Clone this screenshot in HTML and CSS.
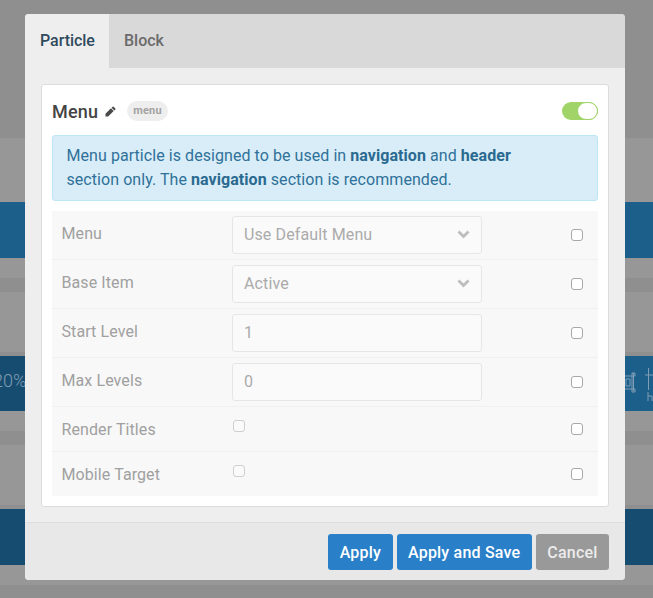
FILE: index.html
```html
<!DOCTYPE html>
<html lang="en">
<head>
<meta charset="utf-8">
<title>Menu particle</title>
<link rel="stylesheet" href="styles.css">
</head>
<body>
<div class="backdrop">
  <div class="band band-top"></div>
  <div class="band band-light b64"></div>
  <div class="band band-blue b56"></div>
  <div class="band band-light b20"></div>
  <div class="band band-dark b14"></div>
  <div class="band band-light b60"></div>
  <div class="band band-thin"></div>
  <div class="band band-grad b55">
    <span class="bg-pct">20%</span>
    <svg class="bg-icons" width="36" height="40" viewBox="0 0 36 40" fill="none" stroke="#7f9db3" stroke-width="1"><path d="M0 11h8v13H0M9.500 8v18M8 8h3v3H8zM8 24h3v3H8zM2 14h4v7H2z"/><path d="M21 10h8M24.500 3v22M24 27v9M24 31h4v5"/></svg>
  </div>
  <div class="band band-light b20"></div>
  <div class="band band-dark b14"></div>
  <div class="band band-light b60"></div>
  <div class="band band-thin"></div>
  <div class="band band-navy b56"></div>
  <div class="band band-light b20"></div>
  <div class="band band-dark b14"></div>
</div>

<div class="modal">
  <div class="tabs">
    <div class="tab tab-active">Particle</div>
    <div class="tab">Block</div>
  </div>
  <div class="body">
    <div class="card">
      <div class="card-head">
        <span class="title">Menu</span>
        <svg class="pencil" width="11" height="11" viewBox="0 0 12 12"><path fill="#4a4a4a" d="M8.300 0.700a0.700 0.700 0 0 1 1 0l2 2a0.700 0.700 0 0 1 0 1l-1.100 1.100-3-3zM6.500 2.500l3 3-6 6H0.500v-3z"/></svg>
        <span class="pill">menu</span>
        <span class="toggle"><span class="knob"></span></span>
      </div>
      <div class="alert">Menu particle is designed to be used in <b>navigation</b> and <b>header</b> section only. The <b>navigation</b> section is recommended.</div>
      <div class="rows">
        <div class="row">
          <div class="label">Menu</div>
          <div class="field select">Use Default Menu<svg class="chev" width="13" height="9" viewBox="0 0 13 9"><path d="M1.500 1.500l5 5 5-5" fill="none" stroke="#bdbdbd" stroke-width="2.800"/></svg></div>
          <span class="check end"></span>
        </div>
        <div class="row">
          <div class="label">Base Item</div>
          <div class="field select">Active<svg class="chev" width="13" height="9" viewBox="0 0 13 9"><path d="M1.500 1.500l5 5 5-5" fill="none" stroke="#bdbdbd" stroke-width="2.800"/></svg></div>
          <span class="check end"></span>
        </div>
        <div class="row">
          <div class="label">Start Level</div>
          <div class="field">1</div>
          <span class="check end"></span>
        </div>
        <div class="row">
          <div class="label">Max Levels</div>
          <div class="field">0</div>
          <span class="check end"></span>
        </div>
        <div class="row row-short">
          <div class="label">Render Titles</div>
          <div class="cell"><span class="check faint"></span></div>
          <span class="check end"></span>
        </div>
        <div class="row row-short">
          <div class="label">Mobile Target</div>
          <div class="cell"><span class="check faint"></span></div>
          <span class="check end"></span>
        </div>
      </div>
    </div>
  </div>
  <div class="footer">
    <button class="btn btn-blue">Apply</button>
    <button class="btn btn-blue">Apply and Save</button>
    <button class="btn btn-gray">Cancel</button>
  </div>
</div>
</body>
</html>
```
FILE: styles.css
```css
* { box-sizing: border-box; }
html, body { margin: 0; padding: 0; }
body {
  width: 653px;
  height: 598px;
  overflow: hidden;
  position: relative;
  font-family: Roboto, "Liberation Sans", sans-serif;
  font-size: 16px;
  background: #8f8f8f;
}

/* dimmed page behind the dialog */
.backdrop { display: flex; flex-direction: column; height: 598px; overflow: hidden; position: relative; }
.band { flex: none; position: relative; }
.band-top { height: 138px; background: #8f8f8f; }
.band-light { background: #979797; }
.band-dark { background: #8f8f8f; }
.band-blue { background: #1c5f8b; }
.band-navy { background: #164c70; }
.band-grad { background: linear-gradient(90deg, #164c70 0, #164c70 25px, #1c5f8b 625px); color: #7f9db3; overflow: hidden; }
.band-thin { height: 4px; background: #8f8f8f; }
.b64 { height: 64px; }
.b60 { height: 60px; }
.b56 { height: 56px; }
.b55 { height: 55px; }
.b20 { height: 20px; }
.b14 { height: 14px; }
.bg-pct { position: absolute; left: -7px; top: 14px; font-size: 18px; font-weight: 300; white-space: nowrap; }
.bg-icons { position: absolute; left: 624px; top: 9px; }

/* dialog */
.modal {
  position: absolute;
  left: 25px;
  top: 14px;
  width: 600px;
  height: 566px;
  background: #eeeeee;
  border-radius: 4px;
  overflow: hidden;
  display: flex;
  flex-direction: column;
}
.tabs { display: flex; height: 54px; background: #d9d9d9; flex: none; }
.tab {
  padding: 0 15px;
  line-height: 54px;
  font-size: 16px;
  font-weight: 500;
  color: #6b6b6b;
}
.tab-active { background: #eeeeee; color: #2f4a5c; width: 84px; letter-spacing: -0.05px; }
.body { flex: 1; padding: 16px 16px 15px; }
.card {
  height: 423px;
  background: #fff;
  border: 1px solid #dcdcdc;
  border-radius: 3px;
  padding: 0 10px;
}
.card-head { display: flex; align-items: center; height: 50px; padding-top: 2px; }
.title { font-size: 18px; font-weight: 500; color: #444444; letter-spacing: 0.2px; }
.pencil { margin-left: 7px; }
.pill {
  margin-left: 11px;
  height: 20px;
  line-height: 20px;
  padding: 0 6px;
  border-radius: 10px;
  background: #eeeeee;
  color: #a3a3a3;
  font-size: 11px;
  font-weight: 700;
  letter-spacing: 0.2px;
}
.toggle {
  margin-left: auto;
  width: 36px;
  height: 18px;
  border-radius: 9px;
  background: #a0d468;
  position: relative;
}
.knob {
  position: absolute;
  right: 0;
  top: 0;
  width: 21px;
  height: 18px;
  border-radius: 9px;
  background: #fff;
  border: 1px solid #a0d468;
}
.alert {
  height: 66px;
  background: #d9edf8;
  border: 1px solid #bde6f4;
  border-radius: 3px;
  padding: 8px 40px 8px 13.500px;
  line-height: 24px;
  color: #2f7199;
  letter-spacing: 0.06px;
}
.alert b { font-weight: 700; color: #2a6a90; }
.rows { margin-top: 10px; background: #f8f8f8; }
.row {
  height: 49px;
  padding: 0 15px 0 9.500px;
  display: flex;
  align-items: flex-start;
  border-bottom: 1px solid #f0f0f0;
}
.row-short { height: 45px; }
.row:last-child { border-bottom: 0; height: 44px; }
.label {
  width: 170.500px;
  flex: none;
  padding-top: 13px;
  line-height: 19px;
  color: #a0a0a0;
  letter-spacing: 0.09px;
}
.field {
  width: 250px;
  height: 38px;
  margin-top: 5px;
  flex: none;
  background: #fafafa;
  border: 1px solid #e6e6e6;
  border-radius: 3px;
  padding: 0 11px;
  line-height: 36px;
  color: #ababab;
  letter-spacing: 0.12px;
  position: relative;
}
.chev { position: absolute; right: 11px; top: 13px; }
.cell { width: 250px; flex: none; padding-top: 13px; padding-left: 1px; }
.check {
  display: block;
  width: 12px;
  height: 12px;
  border: 1px solid #a8a8a8;
  border-radius: 3px;
  background: #fff;
}
.check.faint { border-color: #cfcfcf; background: #fafafa; }
.check.end { margin-left: auto; margin-top: 18px; }
.row-short .check.end { margin-top: 16px; }

.footer {
  flex: none;
  height: 58px;
  background: #e8e8e8;
  border-top: 1px solid #dedede;
  display: flex;
  justify-content: flex-end;
  gap: 4px;
  padding: 11px 16px 0 0;
}
.btn {
  height: 36px;
  border: 0;
  border-radius: 3px;
  padding: 0 11.500px;
  font: 500 16px Roboto, "Liberation Sans", sans-serif;
  letter-spacing: 0.2px;
  color: #fff;
}
.btn-blue { background: #2a7fc9; }
.btn-gray { background: #999999; color: #ececec; }
```
